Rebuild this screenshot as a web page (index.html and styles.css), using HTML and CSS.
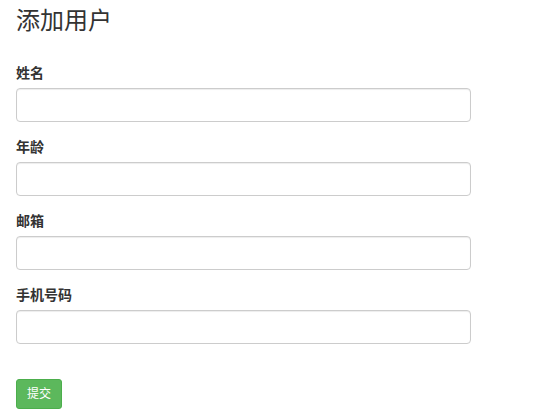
FILE: index.html
```html
<!DOCTYPE html>
<html lang="zh-CN">
<head>
    <meta charset="UTF-8">
    <meta name="viewport" content="width=device-width, initial-scale=1.0">
    <title>添加用户</title>
    <link rel="stylesheet" href="styles.css">
</head>
<body>
    <div class="container">
        <h3>添加用户</h3>
        <form class="user-form">
            <div class="form-group">
                <label for="name">姓名</label>
                <input type="text" class="form-control" id="name">
            </div>
            <div class="form-group">
                <label for="age">年龄</label>
                <input type="text" class="form-control" id="age">
            </div>
            <div class="form-group">
                <label for="email">邮箱</label>
                <input type="text" class="form-control" id="email">
            </div>
            <div class="form-group">
                <label for="phone">手机号码</label>
                <input type="text" class="form-control" id="phone">
            </div>
            <button type="submit" class="btn btn-success btn-sm">提交</button>
        </form>
    </div>
</body>
</html>
```

FILE: styles.css
```css
* {
    box-sizing: border-box;
}

body {
    margin: 0;
    font-family: "Liberation Sans", "Noto Sans CJK SC", sans-serif;
    font-size: 14px;
    line-height: 1.42857143;
    color: #333;
    background: #fff;
}

.container {
    width: 487px;
    padding: 0 16px;
}

h3 {
    font-size: 24px;
    font-weight: 400;
    line-height: 1.1;
    margin: 8px 0 29px;
}

.form-group {
    margin-bottom: 15px;
}

label {
    display: block;
    margin-bottom: 5px;
    font-weight: bold;
}

.form-control {
    display: block;
    width: 100%;
    height: 34px;
    padding: 6px 12px;
    font-size: 14px;
    color: #555;
    background: #fff;
    border: 1px solid #ccc;
    border-radius: 4px;
    box-shadow: inset 0 1px 1px rgba(0, 0, 0, 0.075);
    font-family: inherit;
}

.btn {
    display: inline-block;
    margin-top: 20px;
    border: 1px solid transparent;
    cursor: pointer;
    font-family: inherit;
}

.btn-sm {
    padding: 5px 10px;
    font-size: 12px;
    line-height: 1.5;
    border-radius: 3px;
}

.btn-success {
    color: #fff;
    background: #5cb85c;
    border-color: #4cae4c;
}
```
